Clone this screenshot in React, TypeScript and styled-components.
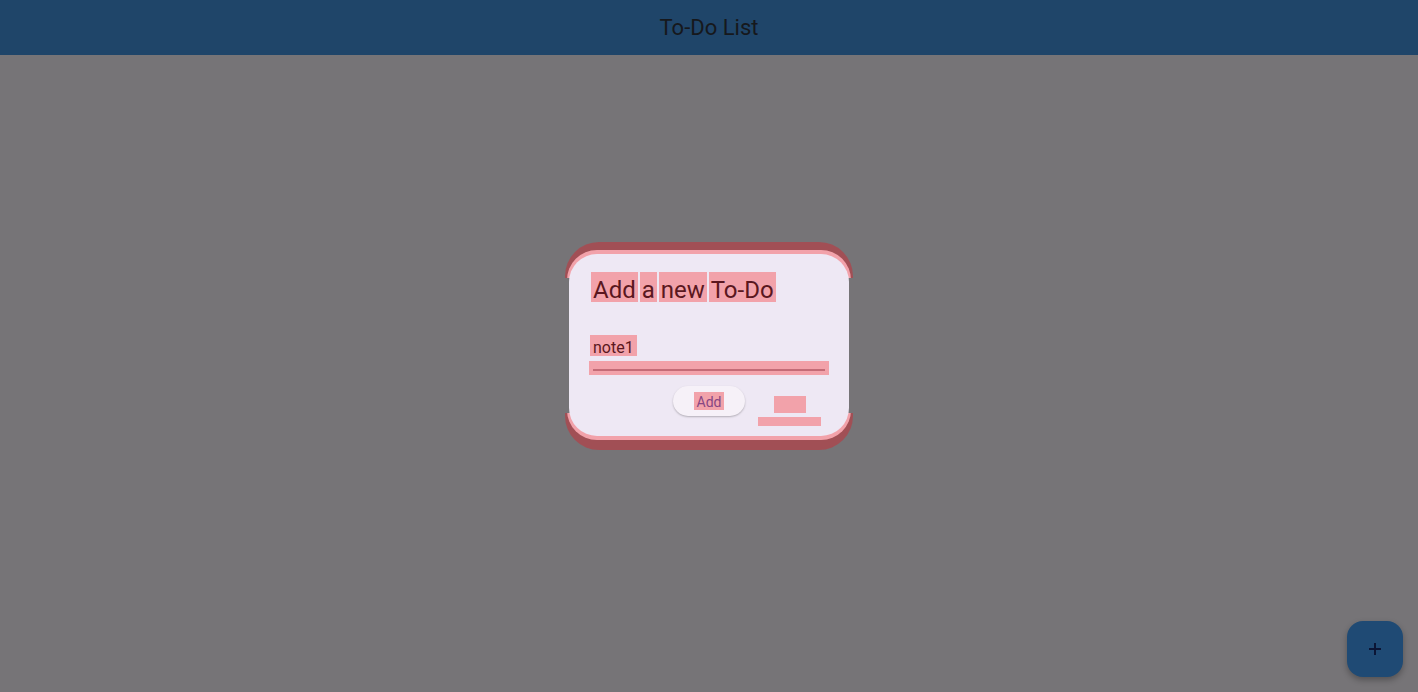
import React from "react";
import styled, { createGlobalStyle } from "styled-components";

const GlobalStyle = createGlobalStyle`
  html, body {
    margin: 0;
    padding: 0;
    height: 100%;
    background: #767477;
    font-family: Roboto, "Noto Sans", "Liberation Sans", sans-serif;
  }
  #root { height: 100%; }
`;

const Page = styled.div`
  height: 100vh;
  display: flex;
  flex-direction: column;
  background: #767477;
`;

const AppBar = styled.header`
  height: 55px;
  flex: none;
  background: #1f4569;
  display: flex;
  align-items: center;
  justify-content: center;
`;

const AppTitle = styled.h1`
  margin: 0;
  font-size: 22px;
  font-weight: 400;
  color: #16181c;
  letter-spacing: 0;
`;

const Body = styled.main`
  flex: 1;
`;

const Overlay = styled.div`
  position: fixed;
  inset: 0;
  display: flex;
  align-items: center;
  justify-content: center;
  pointer-events: none;
`;

const Frame = styled.div`
  width: 288px;
  box-sizing: border-box;
  padding: 8px 2px 10px;
  border-radius: 34px;
  background: linear-gradient(
    to bottom,
    #a14f55 0,
    #a14f55 36px,
    transparent 36px,
    transparent calc(100% - 37px),
    #a14f55 calc(100% - 37px),
    #a14f55 100%
  );
`;

const Ring = styled.div`
  padding: 4px 2px 4px;
  border-radius: 30px;
  background: linear-gradient(
    to bottom,
    #f2a2aa 0,
    #f2a2aa 28px,
    transparent 28px,
    transparent calc(100% - 27px),
    #f2a2aa calc(100% - 27px),
    #f2a2aa 100%
  );
`;

const Surface = styled.section`
  height: 182px;
  box-sizing: border-box;
  padding: 18px 28px 10px 21px;
  border-radius: 28px;
  background: #eee8f4;
  display: flex;
  flex-direction: column;
`;

const Title = styled.h2`
  margin: 0 0 0 3px;
  height: 30px;
  font-size: 24px;
  font-weight: 400;
  color: #5a1720;
  white-space: nowrap;
`;

const Word = styled.span`
  display: inline-block;
  height: 30px;
  box-sizing: border-box;
  padding: 6px 2px 0;
  margin: 0 -2px;
  line-height: 24px;
  background: #f2a2aa;
`;

const Field = styled.div`
  margin-top: 33px;
  display: flex;
  flex-direction: column;
  align-items: flex-start;
`;

const FieldValue = styled.span`
  display: inline-block;
  height: 21px;
  box-sizing: border-box;
  padding: 5px 3px 0;
  font-size: 16px;
  line-height: 16px;
  color: #5a1720;
  background: #f2a2aa;
`;

const Underline = styled.div`
  margin: 5px 0 0 -1px;
  width: 240px;
  height: 14px;
  box-sizing: border-box;
  padding: 8px 4px 0;
  background: #f2a2aa;
  &::after {
    content: "";
    display: block;
    height: 1.5px;
    background: #c46c77;
  }
`;

const Actions = styled.div`
  margin-top: 11px;
  display: flex;
  justify-content: flex-end;
  align-items: flex-start;
  gap: 13px;
`;

const PillButton = styled.button`
  position: relative;
  width: 72px;
  height: 30px;
  border: none;
  border-radius: 15px;
  background: #f6f1f8;
  box-shadow: 0 1px 2px rgba(0, 0, 0, 0.25);
  display: flex;
  align-items: center;
  justify-content: center;
  padding: 0;
  font-family: inherit;
  &::after {
    content: "";
    position: absolute;
    left: 3px;
    right: 3px;
    bottom: -7px;
    height: 9px;
    background: #f2a2aa;
    z-index: -1;
  }
`;

const PillLabel = styled.span`
  display: inline-block;
  height: 18px;
  box-sizing: border-box;
  padding: 3px 3px 0;
  font-size: 14px;
  line-height: 14px;
  font-weight: 400;
  color: #874683;
  background: #f2a2aa;
`;

const GhostButton = styled.div`
  margin-top: 10px;
  width: 63px;
  display: flex;
  flex-direction: column;
  align-items: center;
  gap: 4px;
`;

const GhostBlock = styled.span`
  width: 32px;
  height: 17px;
  background: #f2a2aa;
`;

const GhostStrip = styled.span`
  width: 63px;
  height: 9px;
  background: #f2a2aa;
`;

const Fab = styled.button`
  position: fixed;
  right: 15px;
  bottom: 15px;
  width: 56px;
  height: 56px;
  border: none;
  border-radius: 16px;
  background: #1f4a74;
  box-shadow: 0 3px 6px rgba(0, 0, 0, 0.3);
  display: flex;
  align-items: center;
  justify-content: center;
  padding: 0;
`;

export default function App() {
  return (
    <>
      <GlobalStyle />
      <Page>
        <AppBar>
          <AppTitle>To-Do List</AppTitle>
        </AppBar>
        <Body />
      </Page>
      <Overlay>
        <Frame>
          <Ring>
            <Surface>
              <Title>
                <Word>Add</Word> <Word>a</Word> <Word>new</Word> <Word>To-Do</Word>
              </Title>
              <Field>
                <FieldValue>note1</FieldValue>
                <Underline />
              </Field>
              <Actions>
                <PillButton>
                  <PillLabel>Add</PillLabel>
                </PillButton>
                <GhostButton>
                  <GhostBlock />
                  <GhostStrip />
                </GhostButton>
              </Actions>
            </Surface>
          </Ring>
        </Frame>
      </Overlay>
      <Fab aria-label="Add">
        <svg width="24" height="24" viewBox="0 0 24 24">
          <path d="M12 6v12M6 12h12" stroke="#0b1535" strokeWidth="2" fill="none" />
        </svg>
      </Fab>
    </>
  );
}
